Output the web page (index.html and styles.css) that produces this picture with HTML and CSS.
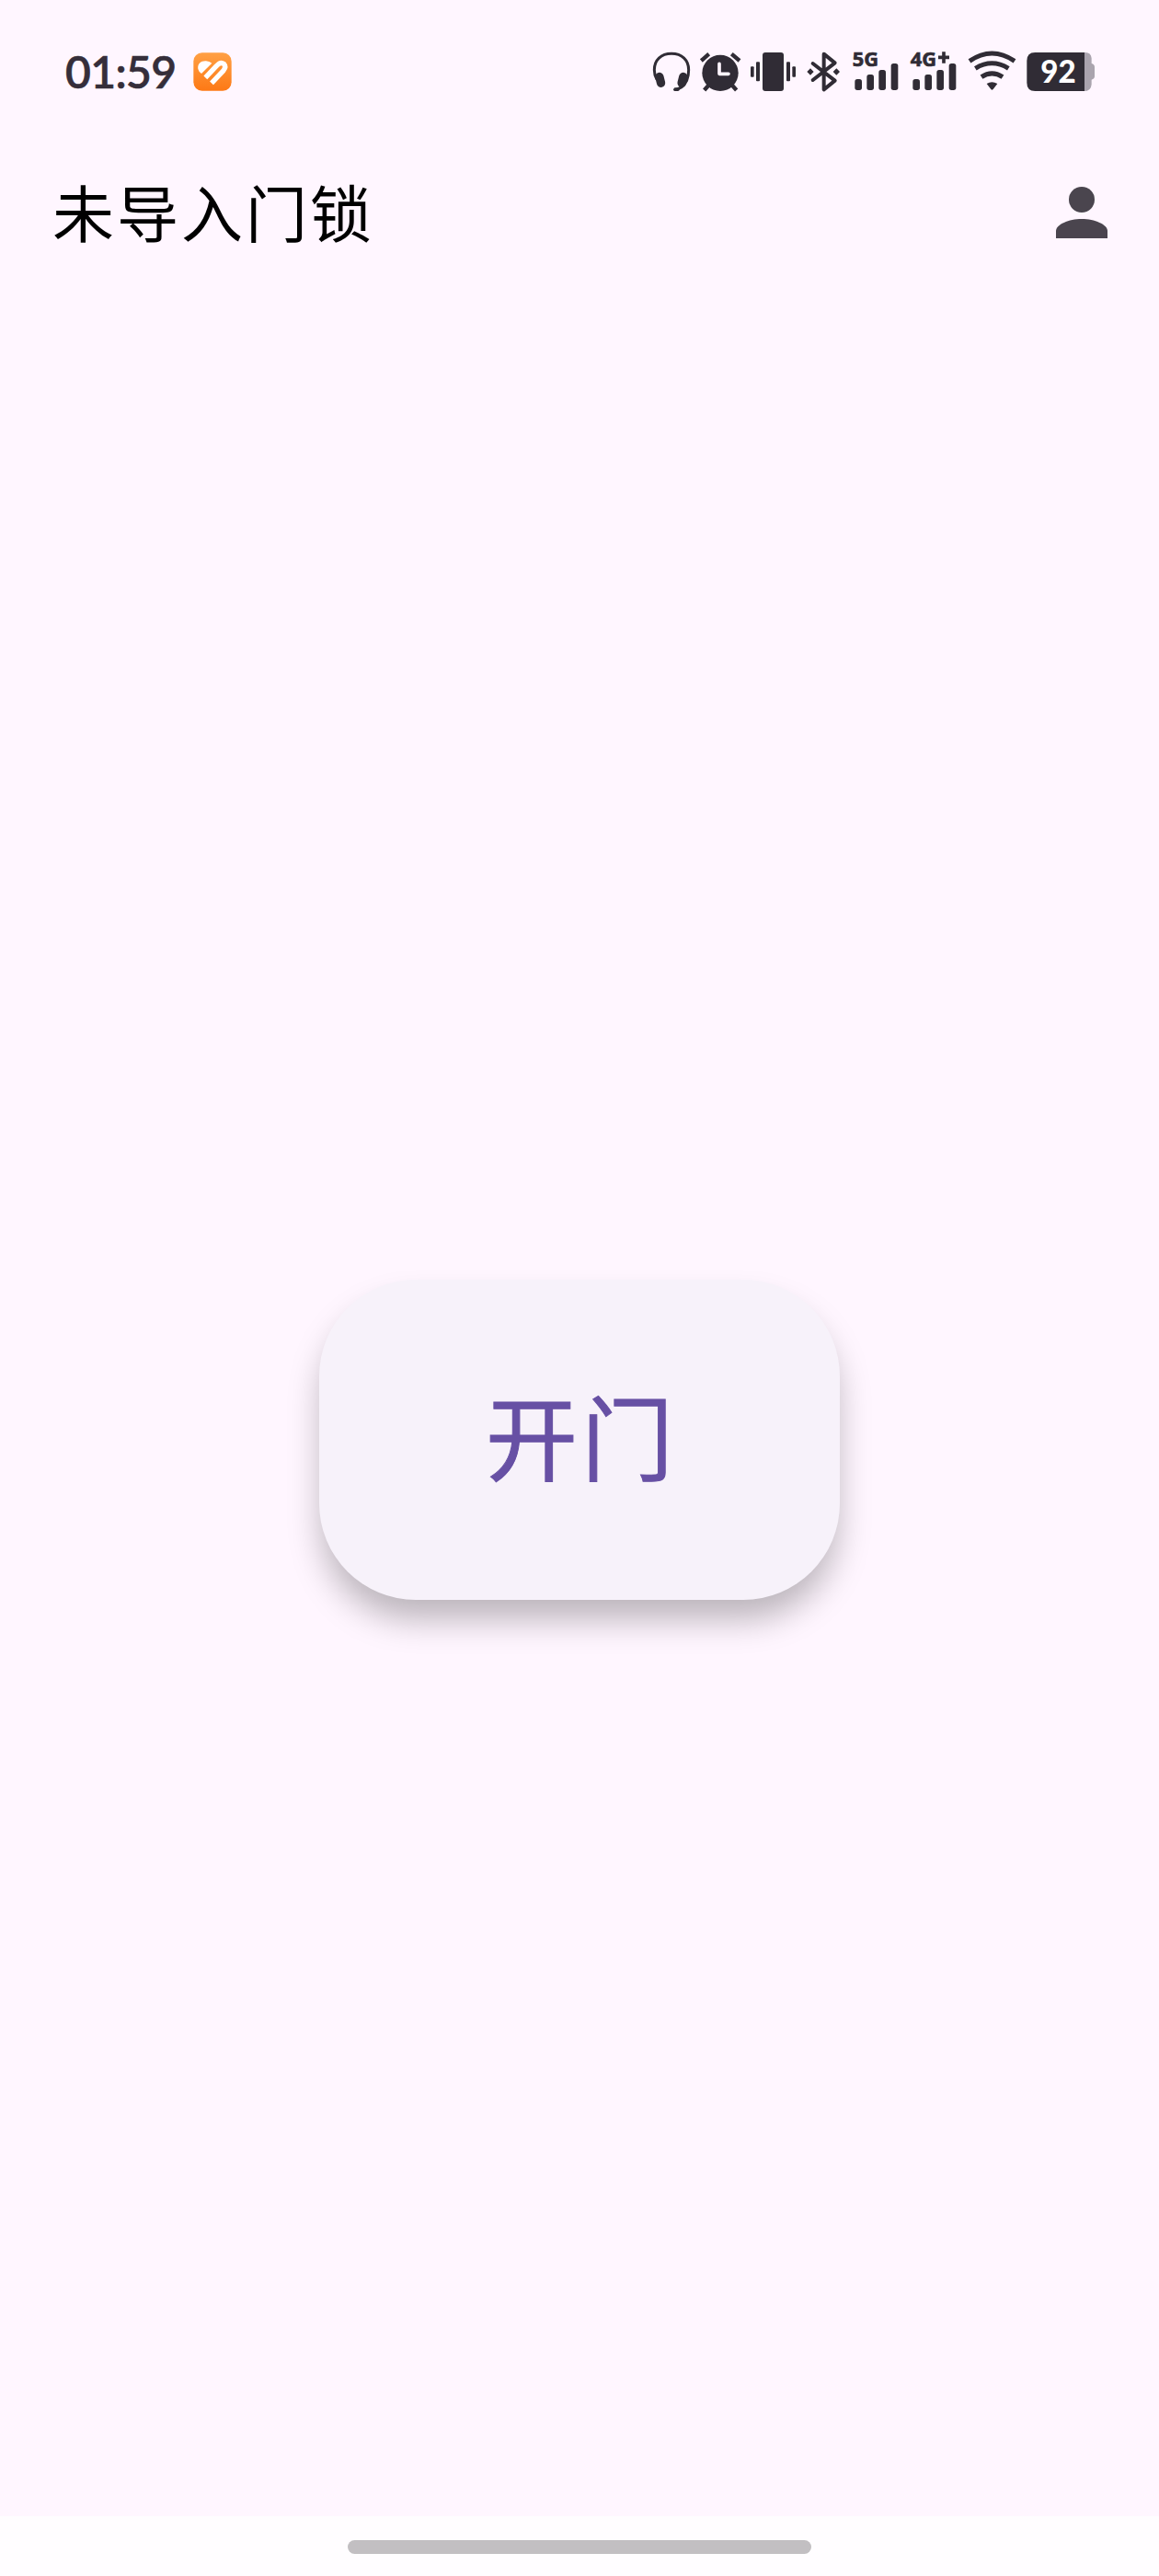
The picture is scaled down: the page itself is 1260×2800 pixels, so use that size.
FILE: index.html
```html
<!DOCTYPE html>
<html lang="zh-CN">
<head>
<meta charset="utf-8">
<title>未导入门锁</title>
<link rel="stylesheet" href="styles.css">
</head>
<body>
<div class="screen">
  <header class="status">
    <span class="clock">01:59</span>
    <svg class="app-badge" viewBox="0 0 126 126">
      <defs><linearGradient id="orange" x1="0" y1="0" x2="0" y2="1"><stop offset="0" stop-color="#ffa044"/><stop offset="1" stop-color="#fd7915"/></linearGradient></defs>
      <rect x="1" y="1" width="124" height="124" rx="28" fill="url(#orange)"/>
      <path d="M16 54C13 37 26 27 42 28Q53 29 61 35L27 69Q18 63 16 54Z" fill="#fff"/>
      <path d="M40 82L76 44Q89 29 100 37Q109 47 99 59L60 100" fill="none" stroke="#fff" stroke-width="16"/>
    </svg>
    <div class="indicators">
      <svg width="48" height="44" viewBox="24 48 144 132">
        <path d="M42 139C34 125 34 120 34 108C34 76 56 55 90 55S146 76 146 108C146 120 146 128 140 142C132 160 120 171 99 171" fill="none" stroke="#302c35" stroke-width="9"/>
        <rect x="39" y="116" width="28" height="49" rx="14" transform="rotate(-14 53 140)"/>
        <rect x="112" y="116" width="28" height="49" rx="14" transform="rotate(14 126 140)"/>
        <rect x="96" y="167" width="20" height="10" rx="5"/>
      </svg>
      <svg width="54" height="44" viewBox="168 48 162 132">
        <circle cx="249" cy="118" r="59"/>
        <path d="M187 78L212 56M286 56L312 78" stroke="#302c35" stroke-width="13"/>
        <path d="M213 156L197 174M286 156L302 174" stroke="#302c35" stroke-width="13"/>
        <path d="M246 88V121H276" fill="none" stroke="#fff6ff" stroke-width="11" stroke-linecap="round" stroke-linejoin="round"/>
      </svg>
      <svg width="61" height="44" viewBox="330 48 183 132">
        <rect x="387" y="51" width="69" height="126" rx="9"/>
        <rect x="366" y="82" width="12" height="63" rx="3"/><rect x="348" y="97" width="11" height="34" rx="3"/>
        <rect x="465" y="82" width="12" height="63" rx="3"/><rect x="484" y="97" width="11" height="34" rx="3"/>
      </svg>
      <svg width="49" height="44" viewBox="33 48 147 132">
        <path d="M71 87L143 143L107 172V56L143 85L71 141" fill="none" stroke="#302c35" stroke-width="12" stroke-linejoin="round" stroke-linecap="round"/>
        <path d="M63 103L74 114L63 125L52 114ZM148 103L159 114L148 125L137 114Z"/>
      </svg>
      <svg width="64" height="44" viewBox="180 48 192 132">
        <text class="net" x="200" y="97" textLength="85" lengthAdjust="spacingAndGlyphs">5G</text>
        <rect x="208" y="138" width="23" height="36" rx="8"/><rect x="247" y="123" width="23" height="51" rx="8"/><rect x="286" y="108" width="23" height="66" rx="8"/><rect x="326" y="87" width="23" height="87" rx="8"/>
      </svg>
      <svg width="62" height="44" viewBox="372 48 186 132">
        <text class="net" x="389" y="97" textLength="85" lengthAdjust="spacingAndGlyphs">4G</text>
        <path d="M480 67H516M498 49V86" stroke="#302c35" stroke-width="11"/>
        <rect x="397" y="138" width="23" height="36" rx="8"/><rect x="436" y="123" width="23" height="51" rx="8"/><rect x="475" y="108" width="23" height="66" rx="8"/><rect x="515" y="87" width="23" height="87" rx="8"/>
      </svg>
      <svg width="64" height="44" viewBox="18 48 192 132">
        <path d="M42 79Q115 29 189 79M61 103Q115 70 169 103M81 131Q115 108 150 131" fill="none" stroke="#302c35" stroke-width="15"/>
        <path d="M98 153Q115 142 133 153L119 171Q115 176 112 171Z"/>
      </svg>
      <svg width="84" height="44" viewBox="210 48 252 132">
        <path d="M416 51H420Q438 51 440 70V87Q450 90 450 98V129Q450 137 440 140V155Q438 177 416 177Z" fill="#aaa4ae"/>
        <path d="M417 51H256Q229 51 229 78V150Q229 177 256 177H417Z"/>
        <text class="level" x="274" y="151" textLength="115" lengthAdjust="spacingAndGlyphs">92</text>
      </svg>
    </div>
  </header>
  <div class="appbar">
    <h1 class="title">未导入门锁</h1>
    <svg class="person" viewBox="0 0 56 56"><circle cx="28" cy="14" r="14"/><path d="M0 56V48C0 41 14 35 28 35S56 41 56 48V56Z"/></svg>
  </div>
  <main class="content"><button class="unlock">开门</button></main>
  <footer class="nav"><div class="handle"></div></footer>
</div>
</body>
</html>
```
FILE: styles.css
```css
* { box-sizing: border-box; }
body { margin: 0; background: #fff6ff; }
.screen {
  width: 1260px;
  height: 2800px;
  display: flex;
  flex-direction: column;
  font-family: "Noto Sans CJK SC", sans-serif;
}
.status {
  height: 156px;
  padding: 0 66px 0 71px;
  display: flex;
  align-items: center;
  fill: #302c35;
}
.status svg { overflow: visible; }
.clock {
  width: 139px;
  font: 600 48px/60px Lato, sans-serif;
  letter-spacing: -0.6px;
  color: #352e3a;
  -webkit-text-stroke: 0.6px #352e3a;
}
.app-badge { width: 42px; height: 42px; }
.indicators { display: flex; margin-left: auto; }
.net { font: 700 66px/1 "Noto Sans", sans-serif; stroke: #302c35; stroke-width: 2px; }
.level { font: 900 103px/1 Lato, sans-serif; fill: #fff; }
.appbar {
  height: 150px;
  padding: 0 56px 0 57px;
  display: flex;
  align-items: center;
  justify-content: space-between;
}
.title {
  margin: 0;
  padding-bottom: 5px;
  font-size: 67px;
  line-height: 96px;
  font-weight: 400;
  letter-spacing: 3px;
  color: #000;
}
.person { width: 56px; height: 56px; fill: #4a454e; }
.content {
  flex: 1;
  display: flex;
  justify-content: center;
  align-items: flex-start;
  padding-top: 1085px;
}
.unlock {
  width: 566px;
  height: 348px;
  padding: 0 0 12px 4px;
  border: 0;
  border-radius: 105px;
  background: #f7f2fa;
  box-shadow: 0 24px 36px -3px rgba(0, 0, 0, 0.27);
  font: 400 100px/144px "Noto Sans CJK SC", sans-serif;
  letter-spacing: 4px;
  color: #6750a4;
  -webkit-text-stroke: 1px #6750a4;
}
.nav {
  height: 65px;
  padding-top: 26px;
  display: flex;
  justify-content: center;
  background: #fffdff;
}
.handle { width: 504px; height: 15px; border-radius: 8px; background: #c2bfc2; }
```
